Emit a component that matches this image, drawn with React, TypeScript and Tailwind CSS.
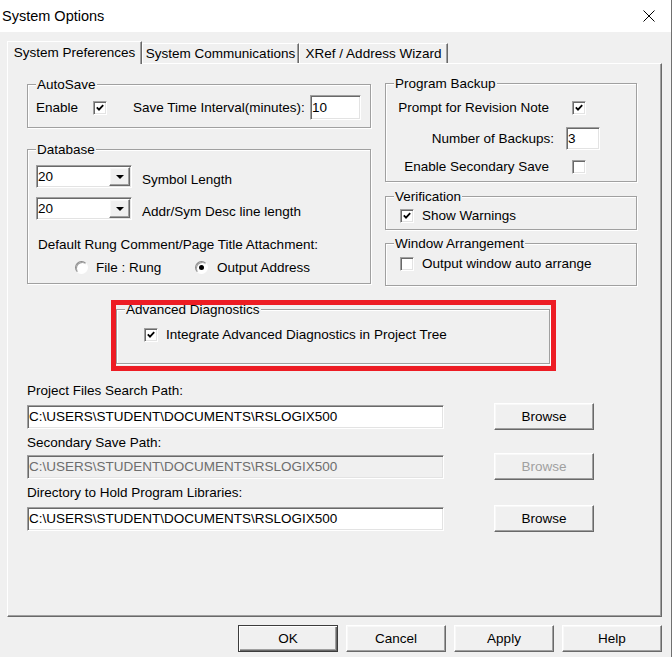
import React from 'react';

const sunken =
  'border border-t-[#a0a0a0] border-l-[#a0a0a0] border-r-white border-b-white shadow-[inset_1px_1px_0_#696969,inset_-1px_-1px_0_#e3e3e3]';
const raised =
  'border border-t-white border-l-white border-r-[#696969] border-b-[#696969] shadow-[inset_-1px_-1px_0_#a0a0a0,inset_1px_1px_0_#f8f8f8]';

function Check({ checked }: { checked?: boolean }) {
  return (
    <span className={`flex h-[14px] w-[14px] shrink-0 items-center justify-center bg-white ${sunken}`}>
      {checked && (
        <svg width="8" height="7" viewBox="0 0 8 7">
          <path d="M0.8 3.4 L3 5.6 L7.2 1.2" fill="none" stroke="#000" strokeWidth="1.8" />
        </svg>
      )}
    </span>
  );
}

function Radio({ on }: { on?: boolean }) {
  return (
    <span className="flex h-[13px] w-[13px] shrink-0 items-center justify-center rounded-full border border-t-[#8a8a8a] border-l-[#8a8a8a] border-r-white border-b-white bg-white shadow-[inset_1px_1px_0_#a0a0a0]">
      {on && <span className="h-[5px] w-[5px] rounded-full bg-black" />}
    </span>
  );
}

function Group({ title, className = '', children }: { title: string; className?: string; children: React.ReactNode }) {
  return (
    <fieldset className={`border border-[#a0a0a0] shadow-[inset_1px_1px_0_#fff,1px_1px_0_#fff] ${className}`}>
      <legend className="ml-[8px] bg-[#f0f0f0] px-[1px] leading-[15px]">{title}</legend>
      {children}
    </fieldset>
  );
}

function Combo({ value }: { value: string }) {
  return (
    <div className={`flex h-[23px] w-[96px] shrink-0 bg-white p-[1px] ${sunken}`}>
      <span className="flex-1 self-center">{value}</span>
      <span className={`flex h-full w-[21px] items-center justify-center bg-[#f0f0f0] ${raised}`}>
        <svg width="8" height="4" viewBox="0 0 8 4">
          <polygon points="0,0 8,0 4,4" fill="#000" />
        </svg>
      </span>
    </div>
  );
}

function PathRow({ value, disabled }: { value: string; disabled?: boolean }) {
  return (
    <div className="flex h-[27px] items-center">
      <div
        className={`flex h-[24px] w-[417px] items-center pl-[1px] ${sunken} ${
          disabled ? 'bg-[#f0f0f0] text-[#6d6d6d]' : 'bg-white'
        }`}
      >
        {value}
      </div>
      <button
        className={`ml-[50px] h-[27px] w-[100px] bg-[#f0f0f0] ${raised} ${disabled ? 'text-[#a0a0a0]' : ''}`}
      >
        Browse
      </button>
    </div>
  );
}

export default function App() {
  const path = 'C:\\USERS\\STUDENT\\DOCUMENTS\\RSLOGIX500';

  return (
    <div className="flex h-[657px] w-[672px] overflow-hidden bg-[#f0f0f0] font-['Liberation_Sans',Arial,sans-serif] text-[13.5px] leading-[15px] text-black">
      <div className="flex w-[671px] flex-col">
        {/* title bar */}
        <div className="flex h-[32px] shrink-0 items-center justify-between bg-white pl-[2px] pr-[16px] text-[14.5px]">
          <span>System Options</span>
          <svg width="12" height="12" viewBox="0 0 12 12">
            <path d="M0.5 0.5 L11.5 11.5 M11.5 0.5 L0.5 11.5" stroke="#000" strokeWidth="1" />
          </svg>
        </div>

        <div className="ml-[7px] mt-[9px] w-[655px]">
          {/* tabs */}
          <div className="relative z-10 -mb-[1px] flex items-end">
            <div className="flex h-[23px] w-[135px] items-center justify-center border-t border-r border-l border-t-white border-r-[#696969] border-l-white bg-[#f0f0f0] pb-[2px] shadow-[inset_-1px_0_0_#a0a0a0]">
              System Preferences
            </div>
            <div className="mb-[1px] flex h-[20px] w-[157px] items-center justify-center border-t border-r border-l border-t-white border-r-[#696969] border-l-white pb-[1px] shadow-[inset_-1px_0_0_#a0a0a0]">
              System Communications
            </div>
            <div className="mb-[1px] flex h-[20px] w-[149px] items-center justify-center border-t border-r border-l border-t-white border-r-[#696969] border-l-white pb-[1px] shadow-[inset_-1px_0_0_#a0a0a0]">
              XRef / Address Wizard
            </div>
          </div>

          {/* tab page */}
          <div className="h-[554px] border border-t-white border-r-[#696969] border-b-[#696969] border-l-white pl-[19px] pt-[13px] shadow-[inset_-1px_-1px_0_#a0a0a0]">
            <div className="grid grid-cols-[344px_252px] items-start gap-x-[14px]">
              {/* left column */}
              <div className="flex flex-col gap-[14px]">
                <Group title="AutoSave">
                  <div className="mt-[3px] mb-[7px] flex h-[25px] items-center pl-[8px]">
                    <span className="w-[57px]">Enable</span>
                    <Check checked />
                    <span className="ml-[26px] w-[177px]">Save Time Interval(minutes):</span>
                    <div className={`flex h-[25px] w-[51px] items-center bg-white pl-[1px] ${sunken}`}>10</div>
                  </div>
                </Group>

                <Group title="Database">
                  <div className="pl-[8px] pt-[8px] pb-[8px]">
                    <div className="flex items-center">
                      <Combo value="20" />
                      <span className="ml-[10px] pt-[5px]">Symbol Length</span>
                    </div>
                    <div className="mt-[9px] flex items-center">
                      <Combo value="20" />
                      <span className="ml-[10px] pt-[5px]">Addr/Sym Desc line length</span>
                    </div>
                    <div className="mt-[17px] pl-[2px]">Default Rung Comment/Page Title Attachment:</div>
                    <div className="mt-[8px] flex h-[15px] items-center pl-[39px]">
                      <span className="flex w-[120px] items-center gap-[8px]">
                        <Radio />
                        File : Rung
                      </span>
                      <span className="flex items-center gap-[9px]">
                        <Radio on />
                        Output Address
                      </span>
                    </div>
                  </div>
                </Group>
              </div>

              {/* right column */}
              <div className="-mt-[1px] flex flex-col">
                <Group title="Program Backup">
                  <div className="pt-[5px] pb-[3px]">
                    <div className="flex h-[23px] items-center justify-end pr-[50px]">
                      <span>Prompt for Revision Note</span>
                      <span className="ml-[23px]">
                        <Check checked />
                      </span>
                    </div>
                    <div className="mt-[8px] flex h-[23px] items-center justify-end pr-[36px]">
                      <span>Number of Backups:</span>
                      <div className={`ml-[12px] flex h-[23px] w-[34px] items-center bg-white pl-[1px] ${sunken}`}>3</div>
                    </div>
                    <div className="mt-[5px] flex h-[23px] items-center justify-end pr-[50px]">
                      <span>Enable Secondary Save</span>
                      <span className="ml-[23px]">
                        <Check />
                      </span>
                    </div>
                  </div>
                </Group>

                <Group title="Verification" className="mt-[7px]">
                  <div className="mt-[4px] mb-[6px] flex h-[15px] items-center gap-[8px] pl-[14px]">
                    <Check checked />
                    Show Warnings
                  </div>
                </Group>

                <Group title="Window Arrangement" className="mt-[6px]">
                  <div className="mt-[5px] mb-[14px] flex h-[15px] items-center gap-[8px] pl-[14px]">
                    <Check />
                    Output window auto arrange
                  </div>
                </Group>
              </div>
            </div>

            {/* advanced diagnostics, with the red highlight drawn over it */}
            <div className="relative ml-[89px] mt-[16px] w-[434px]">
              <Group title="Advanced Diagnostics">
                <div className="mt-[10px] mb-[21px] flex h-[15px] items-center gap-[8px] pl-[27px]">
                  <Check checked />
                  Integrate Advanced Diagnostics in Project Tree
                </div>
              </Group>
              <div className="pointer-events-none absolute -left-[5px] -top-[2px] z-10 h-[71px] w-[445px] border-[5px] border-[#ed1c24]" />
            </div>

            {/* paths */}
            <div className="mt-[19px]">Project Files Search Path:</div>
            <div className="mt-[5px]">
              <PathRow value={path} />
            </div>
            <div className="mt-[5px]">Secondary Save Path:</div>
            <div className="mt-[3px]">
              <PathRow value={path} disabled />
            </div>
            <div className="mt-[5px]">Directory to Hold Program Libraries:</div>
            <div className="mt-[5px]">
              <PathRow value={path} />
            </div>
          </div>
        </div>

        {/* dialog buttons */}
        <div className="mt-[8px] flex justify-end gap-[8px] pr-[9px]">
          <button className="h-[27px] w-[100px] border border-[#3c3c3c] bg-[#f0f0f0] shadow-[inset_1px_1px_0_#fff,inset_-1px_-1px_0_#696969,inset_-2px_-2px_0_#a0a0a0]">
            OK
          </button>
          <button className={`h-[27px] w-[100px] bg-[#f0f0f0] ${raised}`}>Cancel</button>
          <button className={`h-[27px] w-[100px] bg-[#f0f0f0] ${raised}`}>Apply</button>
          <button className={`h-[27px] w-[100px] bg-[#f0f0f0] ${raised}`}>Help</button>
        </div>
      </div>
      <div className="w-[1px] bg-[#707070]" />
    </div>
  );
}
